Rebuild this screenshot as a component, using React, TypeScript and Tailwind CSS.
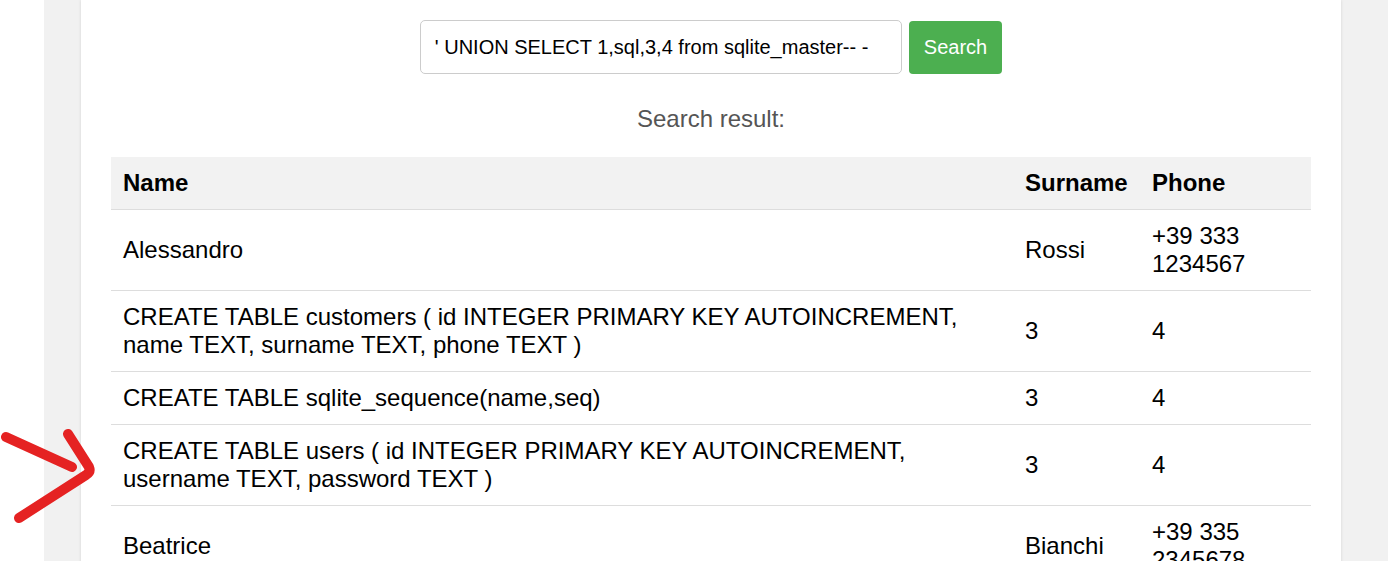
import React from "react";

interface Row {
  name: string;
  surname: string;
  phone: string;
}

const rows: Row[] = [
  { name: "Alessandro", surname: "Rossi", phone: "+39 333 1234567" },
  {
    name: "CREATE TABLE customers ( id INTEGER PRIMARY KEY AUTOINCREMENT, name TEXT, surname TEXT, phone TEXT )",
    surname: "3",
    phone: "4",
  },
  { name: "CREATE TABLE sqlite_sequence(name,seq)", surname: "3", phone: "4" },
  {
    name: "CREATE TABLE users ( id INTEGER PRIMARY KEY AUTOINCREMENT, username TEXT, password TEXT )",
    surname: "3",
    phone: "4",
  },
  { name: "Beatrice", surname: "Bianchi", phone: "+39 335 2345678" },
];

function Arrow() {
  return (
    <svg
      className="pointer-events-none absolute left-0 top-[420px]"
      width="110"
      height="110"
      viewBox="0 420 110 110"
    >
      <g
        fill="none"
        stroke="#e52222"
        strokeWidth="10"
        strokeLinecap="round"
        strokeLinejoin="round"
      >
        <path d="M6 437 L72 467" />
        <path d="M68 434 L89 467 Q91 472 86 475 L19 518" />
      </g>
    </svg>
  );
}

export default function App() {
  return (
    <div className="relative flex min-h-screen bg-white font-['Liberation_Sans',Arial,sans-serif] text-black">
      <div className="w-[44px] shrink-0" />
      <div className="flex-1 bg-[#f1f1f1] pl-[37px]">
        <div className="w-[1260px] bg-white px-[30px] pt-[20px] pb-[40px] shadow-[0_0_3px_rgba(0,0,0,0.12)]">
          <form className="flex items-center justify-center gap-[7px]">
            <input
              readOnly
              value="' UNION SELECT 1,sql,3,4 from sqlite_master-- -"
              className="h-[54px] w-[482px] rounded-[5px] border border-[#cccccc] px-[14px] text-[20px] text-black outline-none"
            />
            <button
              type="button"
              className="h-[53px] rounded-[4px] bg-[#4caf50] px-[15px] text-[20px] text-white"
            >
              Search
            </button>
          </form>
          <p className="mt-[31px] text-center text-[24px] leading-[28px] text-[#555555]">
            Search result:
          </p>
          <table className="mt-[24px] w-full table-fixed border-collapse text-left text-[24px] leading-[28px]">
            <thead>
              <tr className="border-b border-[#dddddd] bg-[#f2f2f2]">
                <th className="w-[902px] px-[12px] py-[12px] font-bold">Name</th>
                <th className="w-[127px] px-[12px] py-[12px] font-bold">Surname</th>
                <th className="w-[171px] px-[12px] py-[12px] font-bold">Phone</th>
              </tr>
            </thead>
            <tbody>
              {rows.map((r, i) => (
                <tr key={i} className="border-b border-[#dddddd]">
                  <td className="px-[12px] py-[12px]">{r.name}</td>
                  <td className="px-[12px] py-[12px]">{r.surname}</td>
                  <td className="px-[12px] py-[12px]">{r.phone}</td>
                </tr>
              ))}
            </tbody>
          </table>
        </div>
      </div>
      <Arrow />
    </div>
  );
}
